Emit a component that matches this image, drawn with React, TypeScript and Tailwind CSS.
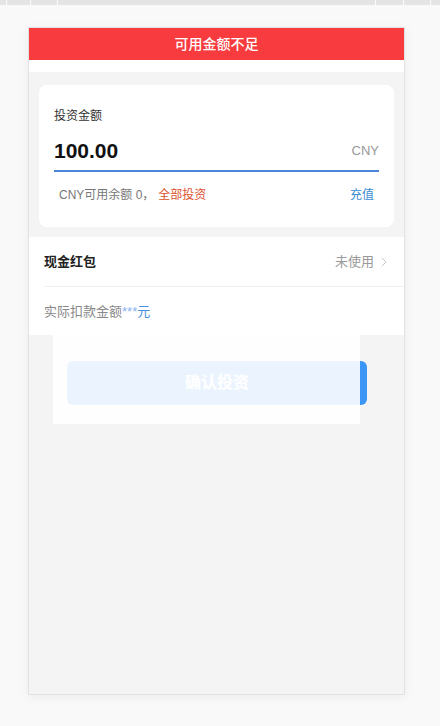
import { ChevronRight } from "lucide-react";

const font = { fontFamily: '"Liberation Sans", "Noto Sans CJK SC", sans-serif' };

const ticks = [6, 30, 57, 375, 403, 430];

const App = () => {
    return (
        <div className="min-h-[726px] w-[440px] bg-[#f9f9f9]" style={font}>
            {/* ruler strip */}
            <div className="relative h-[5px] bg-[#e4e4e4]">
                {ticks.map((x) => (
                    <span key={x} className="absolute top-0 h-[5px] w-px bg-white/80" style={{ left: x }} />
                ))}
            </div>

            <div className="ml-[28px] mt-[22px] flex h-[668px] w-[377px] flex-col border border-[#e2e2e2] bg-[#f4f4f4] shadow-[0_2px_10px_rgba(0,0,0,0.06)]">
                <div className="flex h-[32px] items-center justify-center bg-[#f83b3e] text-[14px] font-medium text-white">
                    可用金额不足
                </div>
                <div className="h-[12px] bg-white" />

                <div className="px-[10px] pt-[13px]">
                    <div className="h-[142px] rounded-[8px] bg-white px-[15px] pt-[23px]">
                        <p className="text-[12px] leading-[17px] text-[#333]">投资金额</p>
                        <div className="mt-[12px] flex items-center justify-between border-b-2 border-[#4a86d6] pb-[5px]">
                            <span className="text-[21px] font-bold leading-[28px] text-[#111]">100.00</span>
                            <span className="text-[13px] text-[#999]">CNY</span>
                        </div>
                        <div className="mt-[15px] flex items-center justify-between pl-[5px] pr-[5px] text-[12px] leading-[17px]">
                            <span className="text-[#777]">
                                CNY可用余额 0，
                                <span className="ml-[4px] text-[#dc5230]">全部投资</span>
                            </span>
                            <span className="text-[#3a8bd0]">充值</span>
                        </div>
                    </div>
                </div>

                <div className="mt-[10px] bg-white">
                    <div className="ml-[15px] flex h-[50px] items-center justify-between border-b border-[#f1f1f1] pr-[12px]">
                        <span className="text-[13px] font-bold text-[#222]">现金红包</span>
                        <span className="flex items-center text-[13px] text-[#999]">
                            未使用
                            <ChevronRight className="ml-[2px] h-[16px] w-[16px] text-[#c8c8c8]" strokeWidth={1.5} />
                        </span>
                    </div>
                    <div className="flex h-[48px] items-center pl-[15px] pt-[2px] text-[13px] text-[#888]">
                        实际扣款金额<span className="text-[#8ab4ee]">***</span>
                        <span className="text-[#4a90e2]">元</span>
                    </div>
                </div>

                <div className="relative">
                    <button className="ml-[38px] mt-[26px] flex h-[44px] w-[300px] items-center justify-center rounded-[6px] bg-[#3b95f5] text-[16px] font-bold text-white">
                        确认投资
                    </button>
                    <div className="absolute left-[24px] top-0 h-[89px] w-[307px] bg-white/[0.9]" />
                </div>
            </div>
        </div>
    );
};

export default App;
